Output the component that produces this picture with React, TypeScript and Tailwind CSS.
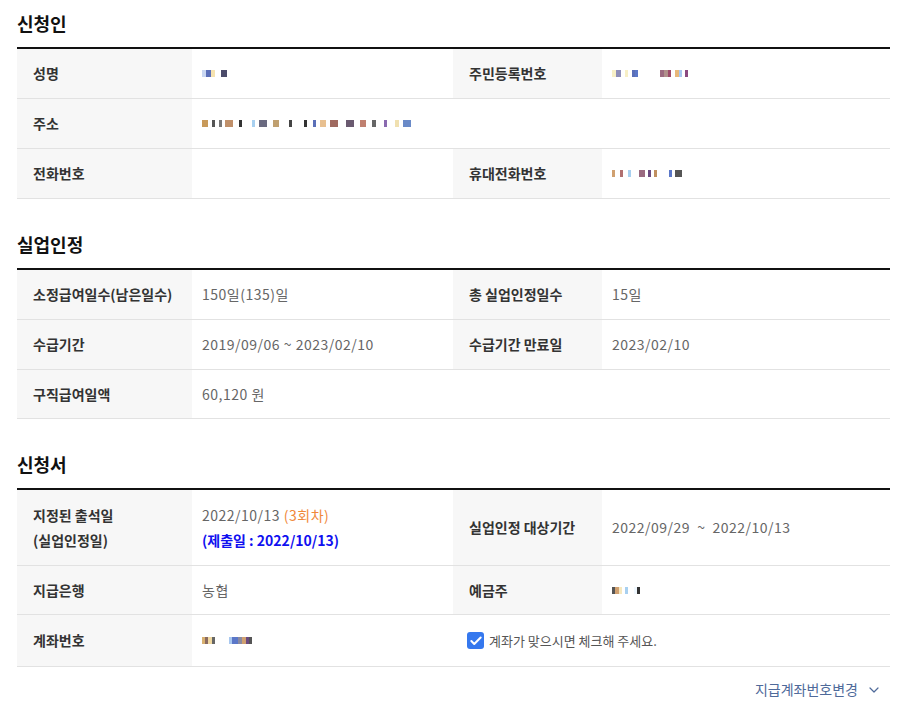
import { ChevronDown, Check } from "lucide-react";

type Blk = [number, string, number?];

// pixelated (masked) personal data
function Masked({ blocks }: { blocks: Blk[] }) {
  return (
    <span className="inline-flex items-center">
      {blocks.map(([w, c, gap], i) => (
        <span
          key={i}
          className="inline-block h-[7px]"
          style={{ width: w, background: c, marginRight: gap ?? 0 }}
        />
      ))}
    </span>
  );
}

const label = "flex items-center bg-[#f7f7f7] px-4 text-[14px] font-bold text-[#333]";
const value = "flex items-center px-[10px] text-[14px] tracking-[0.5px] text-[#666]";
const row = "grid grid-cols-[175px_261px_149px_1fr] border-b border-[#e2e2e2]";

function Title({ children }: { children: string }) {
  return (
    <h2 className="flex h-[47px] items-center text-[18px] font-semibold text-[#111]">
      {children}
    </h2>
  );
}

export default function App() {
  return (
    <div
      className="min-h-screen bg-white px-[17px] pr-[10px]"
      style={{ fontFamily: '"Noto Sans CJK KR", "Noto Sans", sans-serif' }}
    >
      <section>
        <Title>신청인</Title>
        <div className="border-t-2 border-[#111]">
          <div className={`${row} h-[50px]`}>
            <div className={label}>성명</div>
            <div className={value}>
              <Masked blocks={[[4, "#c9d7f2"], [5, "#5b6fb8"], [4, "#f5e2b0", 6], [6, "#4b4b6a"]]} />
            </div>
            <div className={label}>주민등록번호</div>
            <div className={value}>
              <Masked blocks={[[4, "#f7efc6"], [5, "#8e8eb8", 4], [3, "#f7efc6", 4], [3, "#5b6fb8"], [3, "#5b77c8", 22], [4, "#9c6a80"], [4, "#b0908a"], [3, "#9c4a6a", 4], [4, "#e8b87a"], [3, "#a8c8f0", 3], [3, "#8c4a80"]]} />
            </div>
          </div>
          <div className={`${row} h-[50px]`}>
            <div className={label}>주소</div>
            <div className={`${value} col-span-3`}>
              <Masked blocks={[[6, "#c89a5a", 4], [3, "#555", 4], [3, "#777", 3], [8, "#c0906a", 6], [3, "#333", 10], [3, "#a8d0f0", 4], [8, "#6a6a80", 6], [6, "#c0a070", 10], [3, "#444", 12], [3, "#333", 6], [3, "#5b6fb8", 4], [6, "#e8c090", 4], [8, "#a06a60", 8], [8, "#6a5a70", 6], [6, "#c08070", 6], [4, "#666", 8], [3, "#8a6ab0", 8], [4, "#f0e0b0", 4], [8, "#6a8ac8"]]} />
            </div>
          </div>
          <div className={`${row} h-[50px]`}>
            <div className={label}>전화번호</div>
            <div className={value}></div>
            <div className={label}>휴대전화번호</div>
            <div className={value}>
              <Masked blocks={[[3, "#d0a070", 5], [3, "#b07070", 5], [3, "#a8d0f0", 8], [6, "#9a6a80", 3], [3, "#6a4a80", 3], [3, "#c09060", 12], [3, "#5b77c8", 3], [7, "#555"]]} />
            </div>
          </div>
        </div>
      </section>

      <section className="mt-[22px]">
        <Title>실업인정</Title>
        <div className="border-t-2 border-[#111]">
          <div className={`${row} h-[50px]`}>
            <div className={label}>소정급여일수(남은일수)</div>
            <div className={value}>150일(135)일</div>
            <div className={label}>총 실업인정일수</div>
            <div className={value}>15일</div>
          </div>
          <div className={`${row} h-[50px]`}>
            <div className={label}>수급기간</div>
            <div className={value}>2019/09/06 ~ 2023/02/10</div>
            <div className={label}>수급기간 만료일</div>
            <div className={value}>2023/02/10</div>
          </div>
          <div className={`${row} h-[49px]`}>
            <div className={label}>구직급여일액</div>
            <div className={`${value} col-span-3`}>60,120 원</div>
          </div>
        </div>
      </section>

      <section className="mt-[22px]">
        <Title>신청서</Title>
        <div className="border-t-2 border-[#111]">
          <div className={`${row} h-[76px]`}>
            <div className={`${label} leading-[25px]`}>
              지정된 출석일
              <br />
              (실업인정일)
            </div>
            <div className="flex flex-col justify-center px-[10px] text-[14px] leading-[25px] text-[#666]">
              <div className="tracking-[0.5px]">
                2022/10/13 <span className="text-[#f0883a]">(3회차)</span>
              </div>
              <div className="font-semibold text-[#1010f0]">(제출일 : 2022/10/13)</div>
            </div>
            <div className={label}>실업인정 대상기간</div>
            <div className={value}>
              2022/09/29<span className="mx-[7px]">~</span>2022/10/13
            </div>
          </div>
          <div className={`${row} h-[49px]`}>
            <div className={label}>지급은행</div>
            <div className={value}>농협</div>
            <div className={label}>예금주</div>
            <div className={value}>
              <Masked blocks={[[3, "#555"], [4, "#d0a070"], [3, "#f5e8c0", 3], [3, "#a8d0f0", 6], [3, "#f0f8ff"], [3, "#333"]]} />
            </div>
          </div>
          <div className={`${row} h-[52px]`}>
            <div className={label}>계좌번호</div>
            <div className={value}>
              <Masked blocks={[[3, "#d8b070"], [3, "#8a6a60"], [4, "#f0d8a0"], [3, "#666", 14], [3, "#a8c8f0"], [6, "#5b77c8"], [4, "#8a8aa0"], [4, "#d0a070"], [3, "#6a4a80"], [3, "#555"]]} />
            </div>
            <div className="col-span-2 flex items-center gap-[5px] pl-[14px] text-[13px] text-[#555]">
              <span className="flex h-[17px] w-[17px] items-center justify-center rounded-[3px] bg-[#3578ee]">
                <Check className="h-[14px] w-[14px] text-white" strokeWidth={3.5} />
              </span>
              계좌가 맞으시면 체크해 주세요.
            </div>
          </div>
        </div>
      </section>

      <div className="flex justify-end pt-[12px] pr-[8px]">
        <button className="flex items-center gap-[8px] text-[14px] text-[#4f6a9a]">
          지급계좌번호변경
          <ChevronDown className="h-4 w-4" strokeWidth={1.8} />
        </button>
      </div>
    </div>
  );
}
